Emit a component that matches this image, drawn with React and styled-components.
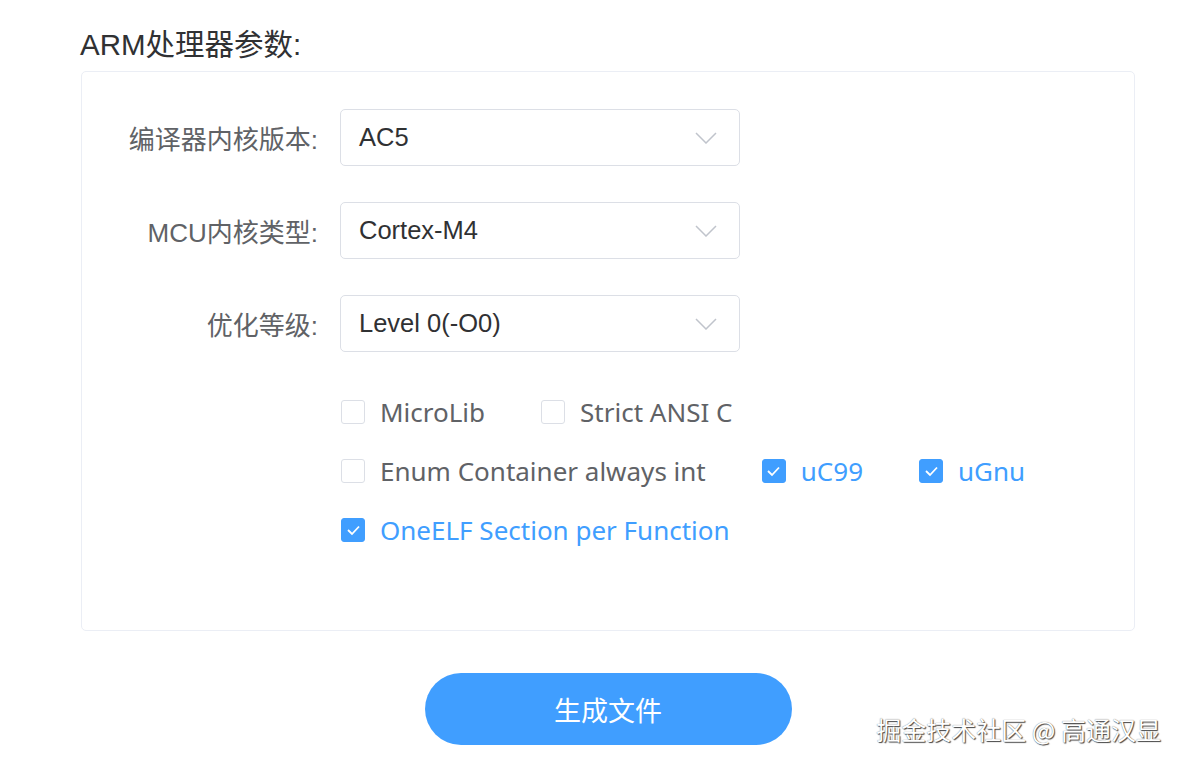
import React from 'react';
import styled, { createGlobalStyle } from 'styled-components';

const Global = createGlobalStyle`
  body {
    margin: 0;
    background: #fff;
    font-family: "Liberation Sans", "Noto Sans CJK SC", sans-serif;
  }
`;

const Page = styled.div`
  position: relative;
  width: 1183px;
  height: 767px;
  padding: 25px 0 0 81px;
  box-sizing: border-box;
`;

const Heading = styled.h2`
  margin: 0 0 6px -1px;
  font-size: 29.5px;
  font-weight: normal;
  line-height: 40px;
  color: #303133;
`;

const Card = styled.div`
  width: 1054px;
  height: 560px;
  box-sizing: border-box;
  border: 1px solid #ebeef5;
  border-radius: 5px;
  padding-top: 37px;
  display: flex;
  flex-direction: column;
  gap: 36px;
`;

const Row = styled.div`
  display: flex;
  align-items: center;
`;

const Label = styled.label`
  width: 258px;
  padding-right: 22px;
  box-sizing: border-box;
  text-align: right;
  font-size: 26px;
  color: #606266;
`;

const Select = styled.div`
  width: 400px;
  height: 57px;
  box-sizing: border-box;
  border: 1.5px solid #dcdfe6;
  border-radius: 5px;
  display: flex;
  align-items: center;
  justify-content: space-between;
  padding: 0 22px 0 18px;
  font-size: 25.5px;
  color: #303133;
`;

const Checks = styled.div`
  margin: 12px 0 0 259px;
  display: flex;
  flex-direction: column;
  gap: 35px;
`;

const CheckRow = styled.div`
  display: flex;
  gap: 56px;
`;

const Check = styled.div`
  display: flex;
  align-items: center;
  gap: 15px;
  font-family: "Noto Sans", "Noto Sans CJK SC", sans-serif;
  font-size: 26px;
  line-height: 24px;
  color: ${p => (p.on ? '#409eff' : '#606266')};
`;

const Box = styled.span`
  width: 24px;
  height: 24px;
  box-sizing: border-box;
  border-radius: 3px;
  border: 1.5px solid ${p => (p.on ? '#409eff' : '#dcdfe6')};
  background: ${p => (p.on ? '#409eff' : '#fff')};
  display: flex;
  align-items: center;
  justify-content: center;
`;

const Footer = styled.div`
  width: 1054px;
  display: flex;
  justify-content: center;
  padding-top: 42px;
`;

const Button = styled.button`
  width: 367px;
  height: 72px;
  border: none;
  border-radius: 36px;
  background: #409eff;
  color: #fff;
  font-family: "Noto Sans CJK SC", sans-serif;
  font-size: 27px;
`;

const Watermark = styled.div`
  position: absolute;
  right: 22px;
  bottom: 20px;
  font-family: "Noto Sans CJK SC", sans-serif;
  font-size: 25px;
  color: #fff;
  text-shadow: 1px 1px 1px #444, 0 0 1px #666;
`;

const Chevron = () => (
  <svg width="22" height="12" viewBox="0 0 22 12">
    <path d="M1 1l10 10 10-10" fill="none" stroke="#c0c4cc" strokeWidth="1.5" />
  </svg>
);

const Tick = () => (
  <svg width="15" height="12" viewBox="0 0 15 12">
    <path d="M2 6l4 4L13 2.5" fill="none" stroke="#fff" strokeWidth="1.8" />
  </svg>
);

const CheckItem = ({ on, children }) => (
  <Check on={on}>
    <Box on={on}>{on && <Tick />}</Box>
    {children}
  </Check>
);

const fields = [
  ['编译器内核版本:', 'AC5'],
  ['MCU内核类型:', 'Cortex-M4'],
  ['优化等级:', 'Level 0(-O0)'],
];

export default function App() {
  return (
    <Page>
      <Global />
      <Heading>ARM处理器参数:</Heading>
      <Card>
        {fields.map(([label, value]) => (
          <Row key={label}>
            <Label>{label}</Label>
            <Select>
              {value}
              <Chevron />
            </Select>
          </Row>
        ))}
        <Checks>
          <CheckRow>
            <CheckItem>MicroLib</CheckItem>
            <CheckItem>Strict ANSI C</CheckItem>
          </CheckRow>
          <CheckRow>
            <CheckItem>Enum Container always int</CheckItem>
            <CheckItem on>uC99</CheckItem>
            <CheckItem on>uGnu</CheckItem>
          </CheckRow>
          <CheckRow>
            <CheckItem on>OneELF Section per Function</CheckItem>
          </CheckRow>
        </Checks>
      </Card>
      <Footer>
        <Button>生成文件</Button>
      </Footer>
      <Watermark>掘金技术社区 @ 高通汉显</Watermark>
    </Page>
  );
}
